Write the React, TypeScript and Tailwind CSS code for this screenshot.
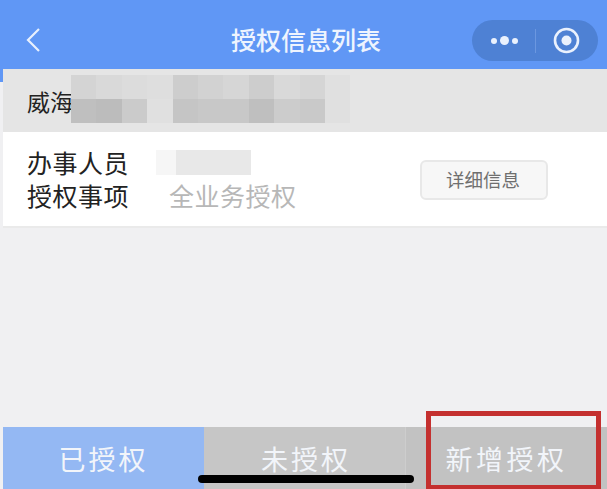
const font = { fontFamily: '"Noto Sans CJK SC", "Noto Sans", sans-serif' };

const top = ['#d4d4d4','#d9d9d9','#dcdcdc','#dedede','#cdcdcd','#d2d2d2','#d6d6d6','#cdcdcd','#d9d9d9','#d5d5d5','#e0e0e0'];
const bottom = ['#bfbfbf','#bcbcbc','#cbcbcb','#e0e0e0','#c5c5c5','#c8c8c8','#c8c8c8','#bfbfbf','#cccccc','#c9c9c9','#e0e0e0'];

function Cells({ colors }: { colors: string[] }) {
  return (
    <div className="flex h-[24px]">
      {colors.map((c, i) => (
        <div key={i} className="w-[25.4px] shrink-0" style={{ background: c }} />
      ))}
    </div>
  );
}

export default function App() {
  return (
    <div className="relative w-[607px] h-[489px] overflow-hidden flex flex-col bg-[#f0f0f2]" style={font}>
      <header className="h-[69px] shrink-0 bg-[#6097f5] flex items-center relative">
        <svg className="ml-[25px] mt-[11px]" width="17" height="26" viewBox="0 0 17 26" fill="none">
          <path d="M14 2 3 13l11 11" stroke="#e8f0fd" strokeWidth="2.2" />
        </svg>
        <div className="absolute left-[231px] top-[23px] text-[25px] leading-[32px] text-[#eef4fe] font-medium whitespace-nowrap">授权信息列表</div>
        <div className="absolute left-[472px] top-[20px] w-[126px] h-[41px] rounded-full bg-[#4e81d4] flex items-center">
          <div className="w-[62px] flex items-center justify-center gap-[3px] ml-[1px]">
            <span className="w-[6px] h-[6px] rounded-full bg-[#eaf1fd]" />
            <span className="w-[9px] h-[9px] rounded-full bg-[#eaf1fd]" />
            <span className="w-[6px] h-[6px] rounded-full bg-[#eaf1fd]" />
          </div>
          <div className="w-px h-[24px] bg-[#6b97e0]" />
          <svg className="ml-[17px]" width="27" height="27" viewBox="0 0 27 27" fill="none">
            <circle cx="13.5" cy="13.5" r="11.5" stroke="#eaf1fd" strokeWidth="2.6" />
            <circle cx="13.5" cy="13.5" r="5" fill="#eaf1fd" />
          </svg>
        </div>
      </header>
      <div className="absolute left-0 top-[69px] w-[3px] h-[13px] bg-[#6097f5]" />

      <main className="flex-1 ml-[3px] flex flex-col">
        <div className="h-[63px] bg-[#e5e5e5] flex items-center pl-[24px] relative">
          <span className="text-[23px] leading-[30px] text-[#222222]">威海</span>
          <div className="absolute left-[68px] top-[6px]">
            <Cells colors={top} />
            <Cells colors={bottom} />
          </div>
        </div>
        <div className="h-[96px] bg-white border-b-2 border-[#eaeaea] flex items-center pl-[24px]">
          <div className="text-[25px] tracking-[0.5px] leading-[33px] text-[#222222] w-[142px] whitespace-nowrap">
            <div>办事人员</div>
            <div>授权事项</div>
          </div>
          <div className="w-[251px] flex flex-col">
            <div className="flex h-[25px] mb-[6px] -ml-[13px]">
              <div className="w-[20px] bg-[#f6f6f6]" />
              <div className="w-[75px] bg-[#e8e8e8]" />
            </div>
            <div className="text-[25px] tracking-[0.5px] leading-[28px] text-[#b7b7b7] whitespace-nowrap">全业务授权</div>
          </div>
          <button className="w-[128px] h-[40px] mt-[1px] pr-[2px] rounded-[6px] border-2 border-[#e8e8e8] bg-[#f7f7f7] text-[18.5px] text-[#6f6f6f] flex items-center justify-center">详细信息</button>
        </div>
      </main>

      <nav className="h-[62px] shrink-0 ml-[3px] flex text-[27px] tracking-[3px] text-[#f2f5fa]">
        <div className="w-[201px] bg-[#94b8f3] flex items-center justify-center pt-[2px]">已授权</div>
        <div className="w-[202px] bg-[#c6c6c6] flex items-center justify-center pt-[2px] pl-[3px] border-r border-[#cdcdcd]">未授权</div>
        <div className="flex-1 bg-[#c2c2c2] flex items-center justify-center pt-[2px] tracking-[3.5px]">新增授权</div>
      </nav>

      <div className="absolute left-[198px] top-[475px] w-[216px] h-[8px] rounded-full bg-black" />
      <div className="absolute left-[426px] top-[411px] w-[175px] h-[78px] border-[5px] border-b-[4px] border-[#c4302f]" />
    </div>
  );
}
